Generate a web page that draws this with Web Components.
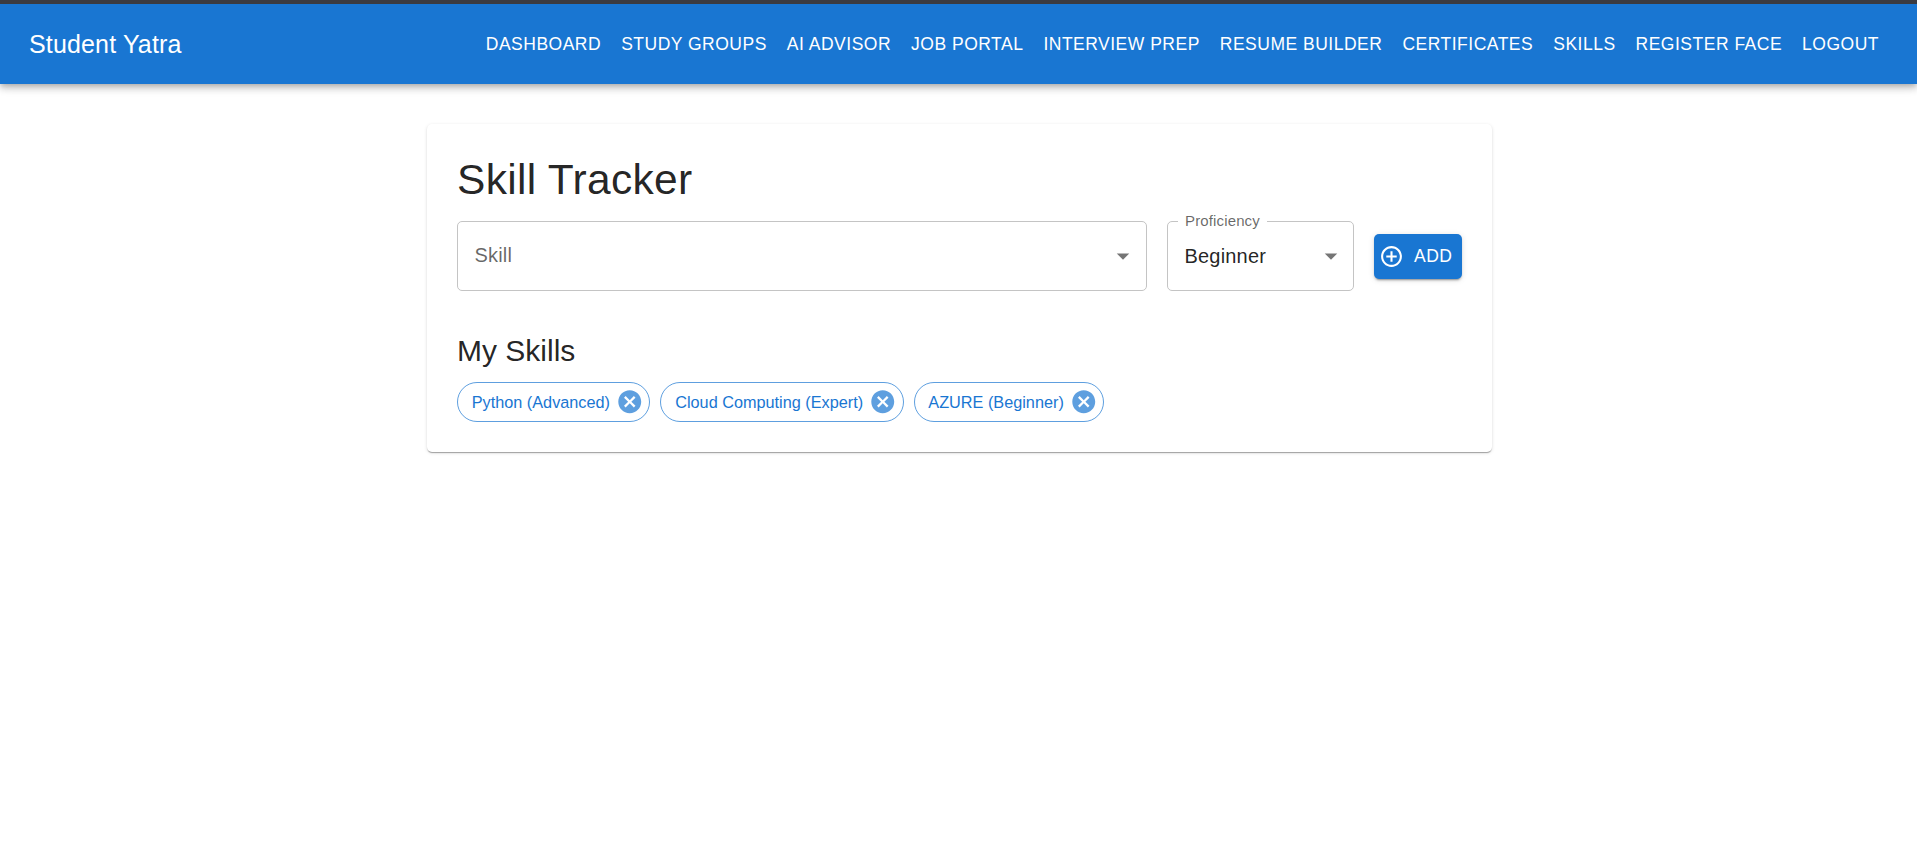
<!DOCTYPE html>
<html lang="en">
<head>
<meta charset="utf-8">
<title>Student Yatra</title>
<style>
html,body{margin:0;background:#fff}
body{font-family:"Liberation Sans",Arial,sans-serif;color:rgba(0,0,0,.87);min-height:865px;overflow:hidden}
</style>
</head>
<body>
<student-app></student-app>
<script>
const define = (name, html, setup) => {
  const t = document.createElement('template');
  t.innerHTML = html;
  customElements.define(name, class extends HTMLElement {
    constructor() {
      super();
      this.attachShadow({mode: 'open'}).appendChild(t.content.cloneNode(true));
    }
    connectedCallback() { if (setup) setup(this); }
  });
};

define('nav-link', `<style>
:host{display:block;padding:0 10px;font-size:17.5px;line-height:30.6px;letter-spacing:.5px;text-transform:uppercase;white-space:nowrap}
</style><slot></slot>`);

define('app-bar', `<style>
:host{display:block;border-top:4px solid #3b3b40;background:#1976d2;color:#fff;position:relative;
box-shadow:0 2.5px 5px -1.25px rgba(0,0,0,.2),0 5px 6.25px 0 rgba(0,0,0,.14),0 1.25px 12.5px 0 rgba(0,0,0,.12)}
header{display:flex;align-items:center;height:80px;padding:0 28px 0 29px;box-sizing:border-box}
.brand{flex:1;font-size:25px;line-height:40px;letter-spacing:.15px}
nav{display:flex}
</style><header><div class="brand"><slot name="brand"></slot></div><nav><slot></slot></nav></header>`);

define('paper-card', `<style>
:host{display:flex;justify-content:center;padding:40px 0 0 2px}
section{box-sizing:border-box;width:1065px;padding:30px;border-radius:5px;background:#fff;
box-shadow:0 2px 1px -1px rgba(0,0,0,.2),0 1px 1px 0 rgba(0,0,0,.14),0 1px 3.75px 0 rgba(0,0,0,.12)}
</style><section><slot></slot></section>`);

define('page-title', `<style>
:host{display:block}
h1{margin:0 0 14.9px;font-weight:400;font-size:42.5px;line-height:52.5px;letter-spacing:.3124px}
</style><h1><slot></slot></h1>`);

define('section-title', `<style>
:host{display:block}
h2{margin:40px 0 10.5px;font-weight:400;font-size:30px;line-height:40px}
</style><h2><slot></slot></h2>`);

define('select-field', `<style>
:host{display:block;position:relative}
fieldset{display:flex;align-items:center;justify-content:space-between;box-sizing:border-box;height:100%;margin:0;min-width:0;
border:1px solid #c4c4c4;border-radius:5px;padding:0 7.5px 0 16.5px;font-size:20px;letter-spacing:.19px}
:host([placeholder]) fieldset{color:rgba(0,0,0,.6);padding-right:8px}
:host([placeholder]) span{padding-bottom:2px}
.label{position:absolute;left:11px;top:-9px;padding:0 7px;background:#fff;color:rgba(0,0,0,.6);font-size:15px;line-height:18px;letter-spacing:.14px}
.label[hidden]{display:none}
svg{width:30px;height:30px;fill:rgba(0,0,0,.54);display:block}
</style><div class="label"></div><fieldset><span><slot></slot></span><svg viewBox="0 0 24 24"><path d="M7 10l5 5 5-5z"/></svg></fieldset>`,
el => {
  const l = el.shadowRoot.querySelector('.label');
  l.textContent = el.getAttribute('label') || '';
  l.hidden = !l.textContent;
});

define('add-button', `<style>
:host{display:block}
button{all:unset;box-sizing:border-box;display:flex;align-items:center;gap:10px;width:88px;height:45px;padding-left:5px;border-radius:5px;background:#1976d2;color:#fff;font-size:17.5px;letter-spacing:.5px;
box-shadow:0 3px 1px -2px rgba(0,0,0,.2),0 2px 2px 0 rgba(0,0,0,.14),0 1px 6.25px 0 rgba(0,0,0,.12)}
svg{width:25px;height:25px;fill:currentColor;flex:none}
</style><button><svg viewBox="0 0 24 24"><path d="M13 7h-2v4H7v2h4v4h2v-4h4v-2h-4zm-1-5C6.48 2 2 6.48 2 12s4.48 10 10 10 10-4.48 10-10S17.52 2 12 2m0 18c-4.41 0-8-3.59-8-8s3.59-8 8-8 8 3.59 8 8-3.59 8-8 8"/></svg><slot></slot></button>`);

define('skill-form', `<style>
:host{display:grid;grid-template-columns:690px 187px 88px;column-gap:20px;height:70px;align-items:center}
::slotted(select-field){height:70px}
</style><slot></slot>`);

define('chip-list', `<style>:host{display:flex;gap:10px}</style><slot></slot>`);

define('skill-chip', `<style>
:host{display:flex;align-items:center;box-sizing:border-box;height:40px;border:1px solid rgba(25,118,210,.7);border-radius:20px;color:#1976d2;font-size:16.25px;white-space:nowrap}
span{padding:1px 13.5px 0 13.75px}
svg{width:27.5px;height:27.5px;margin:0 6px 0 -7.5px;fill:rgba(25,118,210,.7);display:block}
</style><span><slot></slot></span><svg viewBox="0 0 24 24"><path d="M12 2C6.47 2 2 6.47 2 12s4.47 10 10 10 10-4.47 10-10S17.53 2 12 2zm5 13.59L15.59 17 12 13.41 8.41 17 7 15.59 10.59 12 7 8.41 8.41 7 12 10.59 15.59 7 17 8.41 13.41 12 17 15.59z"/></svg>`);

define('student-app', `<style>:host{display:block}</style>
<app-bar>
<span slot="brand">Student Yatra</span>
<nav-link>Dashboard</nav-link><nav-link>Study Groups</nav-link><nav-link>AI Advisor</nav-link><nav-link>Job Portal</nav-link><nav-link>Interview Prep</nav-link><nav-link>Resume Builder</nav-link><nav-link>Certificates</nav-link><nav-link>Skills</nav-link><nav-link>Register Face</nav-link><nav-link>Logout</nav-link>
</app-bar>
<paper-card>
<page-title>Skill Tracker</page-title>
<skill-form><select-field placeholder>Skill</select-field><select-field label="Proficiency">Beginner</select-field><add-button>ADD</add-button></skill-form>
<section-title>My Skills</section-title>
<chip-list><skill-chip>Python (Advanced)</skill-chip><skill-chip>Cloud Computing (Expert)</skill-chip><skill-chip>AZURE (Beginner)</skill-chip></chip-list>
</paper-card>`);
</script>
</body>
</html>
